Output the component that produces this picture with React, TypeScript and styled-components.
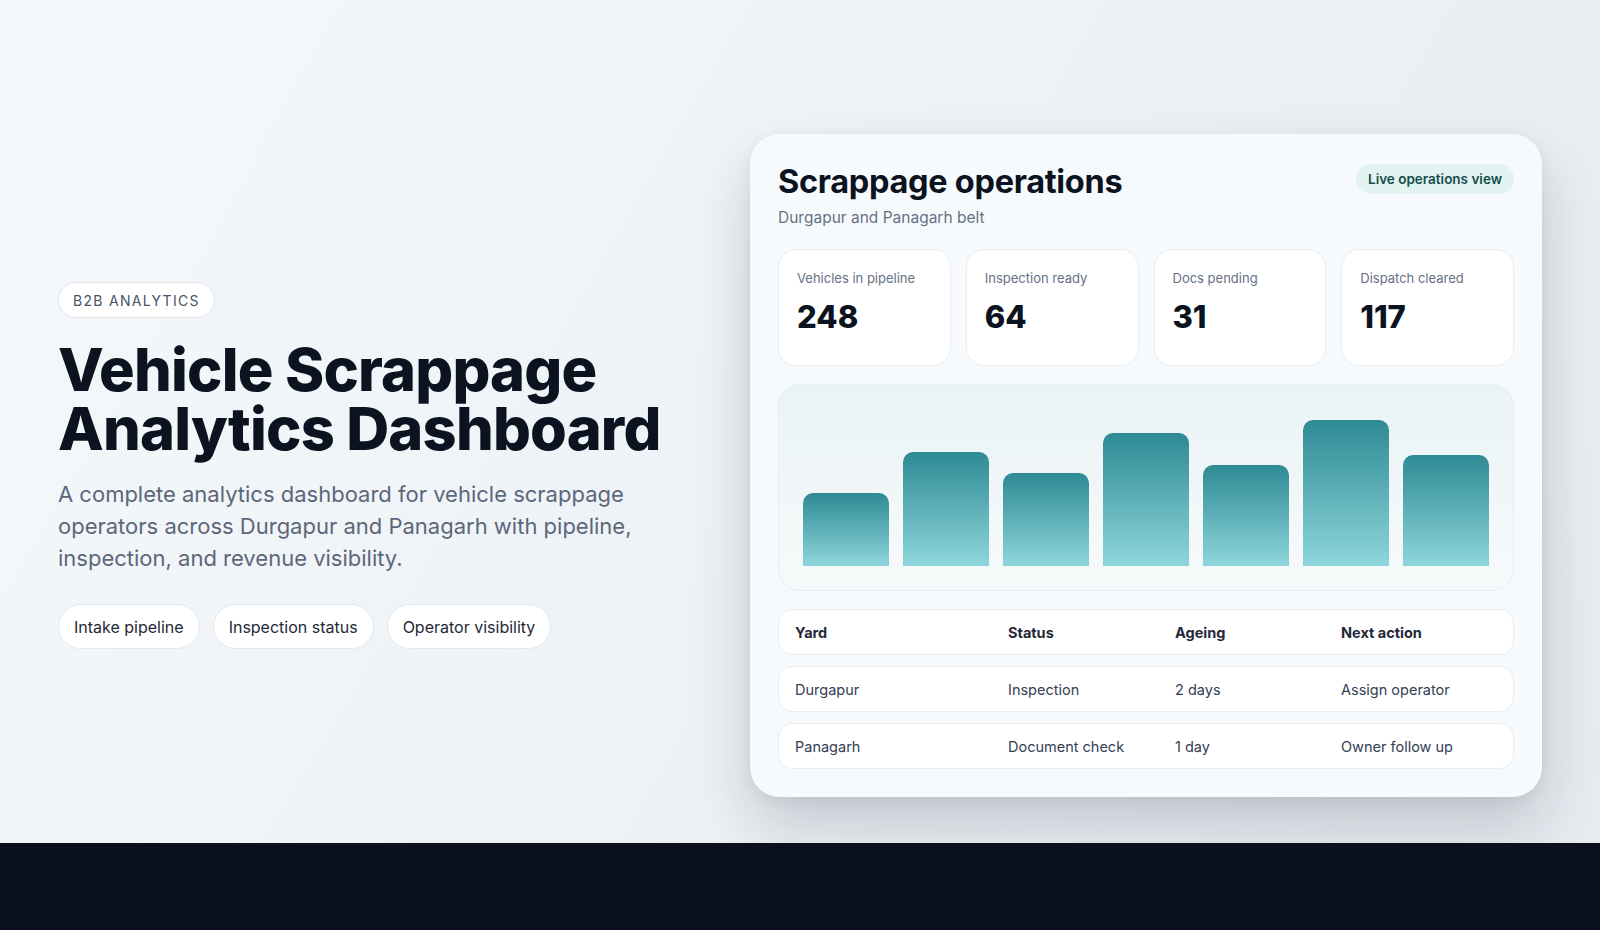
import React from "react";
import styled, { createGlobalStyle } from "styled-components";

const Global = createGlobalStyle`
  html, body { margin: 0; padding: 0; }
  body { font-family: Inter, "Noto Sans", sans-serif; background: #0b1120; }
  * { box-sizing: border-box; }
`;

const Page = styled.div`
  width: 1600px;
  height: 930px;
  display: flex;
  flex-direction: column;
`;

const Hero = styled.section`
  height: 843px;
  background: linear-gradient(120deg, #f5f8fb 0%, #eef2f6 50%, #e7ebf0 100%);
  display: grid;
  grid-template-columns: 692px 792px;
  align-items: center;
  padding: 0 58px;
`;

const Footer = styled.footer`
  flex: 1;
  background: #0a101d;
`;

const Left = styled.div`
  display: flex;
  flex-direction: column;
  align-items: flex-start;
  margin-top: 88px;
`;

const Tag = styled.span`
  border: 1px solid #dfe5ec;
  background: #ffffff;
  border-radius: 999px;
  height: 36px;
  padding: 0 14px;
  display: inline-flex;
  align-items: center;
  font-size: 14px;
  letter-spacing: 1.3px;
  color: #475467;
`;

const Title = styled.h1`
  margin: 22px 0 0;
  font-size: 59.5px;
  line-height: 59px;
  font-weight: 800;
  letter-spacing: -0.8px;
  color: #0b1220;
`;

const Lead = styled.p`
  margin: 20px 0 0;
  font-size: 22px;
  line-height: 32px;
  color: #5b677a;
  width: 610px;
`;

const Chips = styled.div`
  display: flex;
  gap: 13px;
  margin-top: 30px;
`;

const Chip = styled.span`
  height: 45px;
  padding: 0 15px;
  border-radius: 999px;
  background: #ffffff;
  border: 1px solid #e3e8ee;
  display: inline-flex;
  align-items: center;
  font-size: 16px;
  color: #1f2937;
`;

const Card = styled.div`
  width: 792px;
  height: 663px;
  margin-top: 88px;
  background: #f7fafc;
  border-radius: 30px;
  padding: 28px 28px;
  box-shadow: 0 30px 60px rgba(15, 23, 42, 0.18), 0 4px 14px rgba(15, 23, 42, 0.06);
  display: flex;
  flex-direction: column;
`;

const CardHead = styled.div`
  display: flex;
  justify-content: space-between;
  align-items: flex-start;
`;

const CardTitle = styled.h2`
  margin: 0;
  font-size: 32.5px;
  line-height: 40px;
  font-weight: 700;
  color: #0b1220;
  letter-spacing: -0.3px;
`;

const CardSub = styled.div`
  margin-top: 6px;
  font-size: 15.5px;
  color: #667085;
`;

const Live = styled.span`
  background: #e3f3f2;
  color: #134e4a;
  font-size: 13.5px;
  font-weight: 600;
  padding: 7px 12px;
  border-radius: 999px;
  margin-top: 2px;
`;

const Stats = styled.div`
  display: grid;
  grid-template-columns: repeat(4, 1fr);
  gap: 15px;
  margin-top: 22px;
`;

const Stat = styled.div`
  background: #ffffff;
  border: 1px solid #e8edf2;
  border-radius: 18px;
  height: 117px;
  padding: 20px 18px;
`;

const StatLabel = styled.div`
  font-size: 13px;
  color: #667085;
`;

const StatValue = styled.div`
  margin-top: 12px;
  font-size: 31px;
  font-weight: 800;
  color: #0b1220;
`;

const Chart = styled.div`
  margin-top: 18px;
  height: 208px;
  border-radius: 22px;
  border: 1px solid #e6eef2;
  background: linear-gradient(180deg, #eaf3f4 0%, #f7fafb 100%);
  padding: 0 24px 24px;
  display: flex;
  align-items: flex-end;
  gap: 14px;
`;

const Bar = styled.div`
  flex: 1;
  border-radius: 10px 10px 0 0;
  background: linear-gradient(180deg, #2e8a94 0%, #8ed6dc 100%);
`;

const Table = styled.div`
  display: flex;
  flex-direction: column;
  gap: 11px;
  margin-top: 18px;
`;

const Row = styled.div<{ $head?: boolean }>`
  display: grid;
  grid-template-columns: 213px 167px 166px 1fr;
  align-items: center;
  height: 46px;
  padding: 0 16px;
  background: #ffffff;
  border: 1px solid #e8edf2;
  border-radius: 14px;
  font-size: 14.5px;
  color: ${(p) => (p.$head ? "#1f2937" : "#344054")};
  font-weight: ${(p) => (p.$head ? 700 : 400)};
`;

const stats = [
  ["Vehicles in pipeline", "248"],
  ["Inspection ready", "64"],
  ["Docs pending", "31"],
  ["Dispatch cleared", "117"],
];
const bars = [73, 114, 93, 133, 101, 146, 111];
const rows = [
  ["Durgapur", "Inspection", "2 days", "Assign operator"],
  ["Panagarh", "Document check", "1 day", "Owner follow up"],
];

export default function App() {
  return (
    <Page>
      <Global />
      <Hero>
        <Left>
          <Tag>B2B ANALYTICS</Tag>
          <Title>
            Vehicle Scrappage
            <br />
            Analytics Dashboard
          </Title>
          <Lead>
            A complete analytics dashboard for vehicle scrappage operators across Durgapur and
            Panagarh with pipeline, inspection, and revenue visibility.
          </Lead>
          <Chips>
            <Chip>Intake pipeline</Chip>
            <Chip>Inspection status</Chip>
            <Chip>Operator visibility</Chip>
          </Chips>
        </Left>
        <Card>
          <CardHead>
            <div>
              <CardTitle>Scrappage operations</CardTitle>
              <CardSub>Durgapur and Panagarh belt</CardSub>
            </div>
            <Live>Live operations view</Live>
          </CardHead>
          <Stats>
            {stats.map(([l, v]) => (
              <Stat key={l}>
                <StatLabel>{l}</StatLabel>
                <StatValue>{v}</StatValue>
              </Stat>
            ))}
          </Stats>
          <Chart>
            {bars.map((h, i) => (
              <Bar key={i} style={{ height: h }} />
            ))}
          </Chart>
          <Table>
            <Row $head>
              <span>Yard</span>
              <span>Status</span>
              <span>Ageing</span>
              <span>Next action</span>
            </Row>
            {rows.map((r) => (
              <Row key={r[0]}>
                {r.map((c) => (
                  <span key={c}>{c}</span>
                ))}
              </Row>
            ))}
          </Table>
        </Card>
      </Hero>
      <Footer />
    </Page>
  );
}
